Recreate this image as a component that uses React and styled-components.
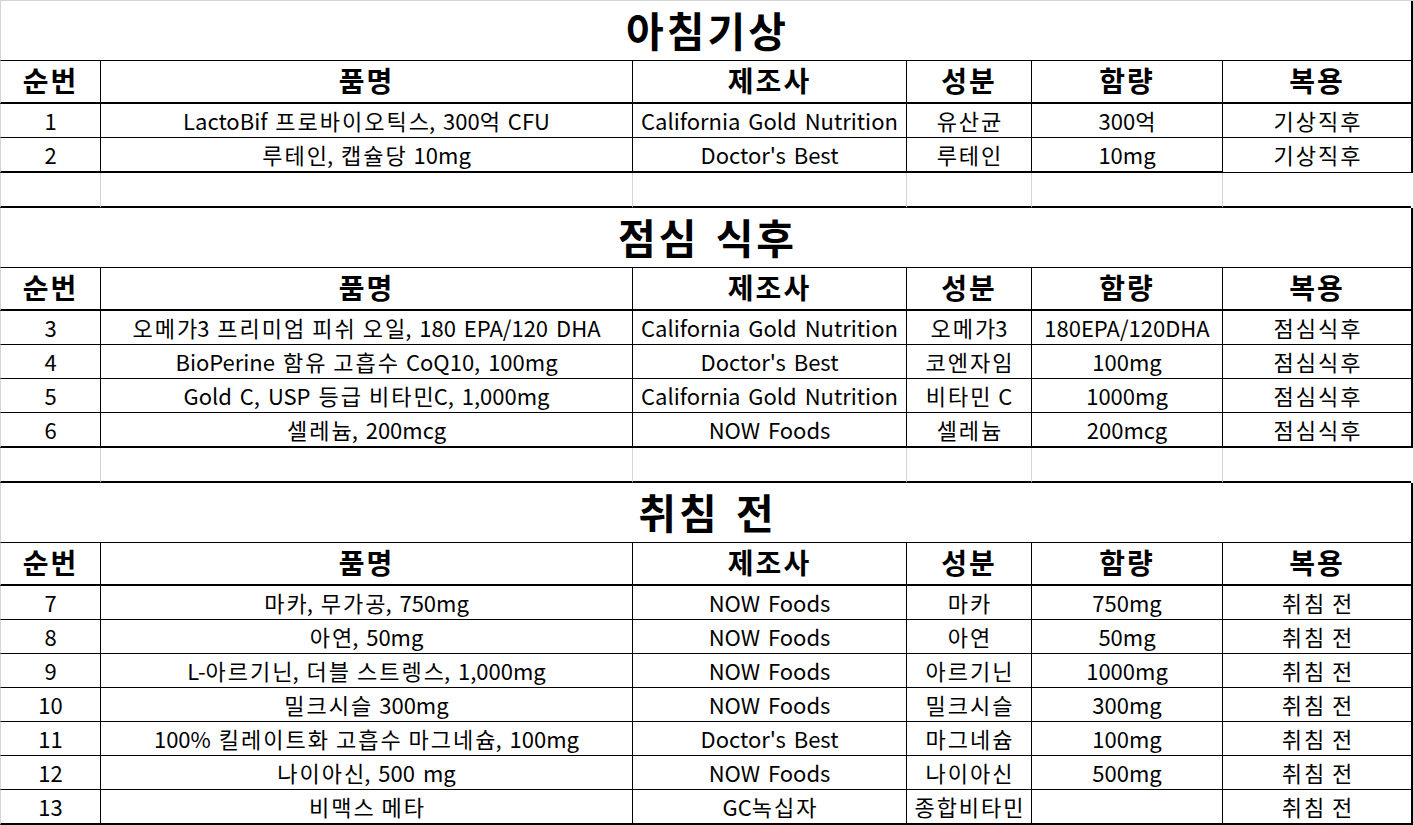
import React from 'react';
import styled, { createGlobalStyle } from 'styled-components';

const GlobalStyle = createGlobalStyle`
  html, body {
    margin: 0;
    padding: 0;
    background: #ffffff;
  }
  body {
    font-family: "Noto Sans CJK KR", "Noto Sans", sans-serif;
    color: #000;
  }
  * {
    box-sizing: border-box;
  }
`;

const GRID = '#d4d4d4';
const COLUMNS = '100px 532px 274px 125px 191px 189px';

const Sheet = styled.div`
  width: 1414px;
  height: 825px;
  overflow: hidden;
  border-top: 1px solid ${GRID};
  border-right: 1px solid ${GRID};
  display: flex;
  flex-direction: column;
`;

const TitleRow = styled.div`
  width: 1413px;
  height: 60px;
  display: flex;
  align-items: center;
  justify-content: center;
  border-left: 1px solid ${GRID};
  border-right: 2px solid #000;
  border-bottom: 1px solid #000;
  font-size: 41px;
  font-weight: 700;
  letter-spacing: 3px;
  word-spacing: 4px;
  line-height: 1;
  padding: 0 0 2px 3px;
`;

const Row = styled.div`
  width: 1413px;
  display: grid;
  grid-template-columns: ${COLUMNS};
  border-right: 2px solid ${(p) => (p.$blank ? '#fff' : '#000')};
`;

const Cell = styled.div`
  height: ${(p) => p.$height}px;
  display: flex;
  align-items: center;
  justify-content: center;
  white-space: nowrap;
  border-left: 1px solid ${(p) => (p.$first || p.$blank ? GRID : '#000')};
  border-bottom: ${(p) => (p.$thick ? 2 : 1)}px solid #000;
  font-size: ${(p) => (p.$head ? 28 : 22)}px;
  font-weight: ${(p) => (p.$head ? 700 : 400)};
  letter-spacing: ${(p) => (p.$head ? 2 : 0)}px;
  word-spacing: 3px;
  line-height: 1;
  padding-bottom: ${(p) => (p.$head ? 3 : 2)}px;
`;

const Line = styled.span`
  white-space: pre;
`;

// Hangul runs are set a little wider, the way the spreadsheet font spaces them
const Hangul = styled.span`
  letter-spacing: 2px;
`;

const Text = ({ children }) => (
  <Line>
    {String(children)
      .split(/([\uAC00-\uD7A3]+)/)
      .map((part, i) =>
        /[\uAC00-\uD7A3]/.test(part) ? (
          <React.Fragment key={i}>
            <Hangul>{part.slice(0, -1)}</Hangul>
            {part.slice(-1)}
          </React.Fragment>
        ) : (
          part
        )
      )}
  </Line>
);

const HEAD = ['순번', '품명', '제조사', '성분', '함량', '복용'];

const sections = [
  {
    title: '아침기상',
    rows: [
      ['1', 'LactoBif 프로바이오틱스, 300억 CFU', 'California Gold Nutrition', '유산균', '300억', '기상직후'],
      ['2', '루테인, 캡슐당 10mg', "Doctor's Best", '루테인', '10mg', '기상직후'],
    ],
    thinLast: true,
  },
  {
    title: '점심 식후',
    rows: [
      ['3', '오메가3 프리미엄 피쉬 오일, 180 EPA/120 DHA', 'California Gold Nutrition', '오메가3', '180EPA/120DHA', '점심식후'],
      ['4', 'BioPerine 함유 고흡수 CoQ10, 100mg', "Doctor's Best", '코엔자임', '100mg', '점심식후'],
      ['5', 'Gold C, USP 등급 비타민C, 1,000mg', 'California Gold Nutrition', '비타민 C', '1000mg', '점심식후'],
      ['6', '셀레늄, 200mcg', 'NOW Foods', '셀레늄', '200mcg', '점심식후'],
    ],
  },
  {
    title: '취침 전',
    rows: [
      ['7', '마카, 무가공, 750mg', 'NOW Foods', '마카', '750mg', '취침 전'],
      ['8', '아연, 50mg', 'NOW Foods', '아연', '50mg', '취침 전'],
      ['9', 'L-아르기닌, 더블 스트렝스, 1,000mg', 'NOW Foods', '아르기닌', '1000mg', '취침 전'],
      ['10', '밀크시슬 300mg', 'NOW Foods', '밀크시슬', '300mg', '취침 전'],
      ['11', '100% 킬레이트화 고흡수 마그네슘, 100mg', "Doctor's Best", '마그네슘', '100mg', '취침 전'],
      ['12', '나이아신, 500 mg', 'NOW Foods', '나이아신', '500mg', '취침 전'],
      ['13', '비맥스 메타', 'GC녹십자', '종합비타민', '', '취침 전'],
    ],
    noBlank: true,
  },
];

const Section = ({ title, rows, thinLast, noBlank }) => (
  <>
    <TitleRow>{title}</TitleRow>
    <Row>
      {HEAD.map((h, i) => (
        <Cell key={h} $head $height={43} $thick $first={i === 0}>
          {h}
        </Cell>
      ))}
    </Row>
    {rows.map((r, ri) => {
      const last = ri === rows.length - 1;
      return (
        <Row key={r[0]}>
          {r.map((v, i) => (
            <Cell
              key={i}
              $height={last ? 35 : 34}
              $thick={last && !(thinLast && i === 5)}
              $first={i === 0}
            >
              <Text>{v}</Text>
            </Cell>
          ))}
        </Row>
      );
    })}
    {!noBlank && (
      <Row $blank>
        {HEAD.map((h) => (
          <Cell key={h} $blank $thick $height={35} />
        ))}
      </Row>
    )}
  </>
);

const App = () => (
  <>
    <GlobalStyle />
    <Sheet>
      {sections.map((s) => (
        <Section key={s.title} {...s} />
      ))}
    </Sheet>
  </>
);

export default App;
